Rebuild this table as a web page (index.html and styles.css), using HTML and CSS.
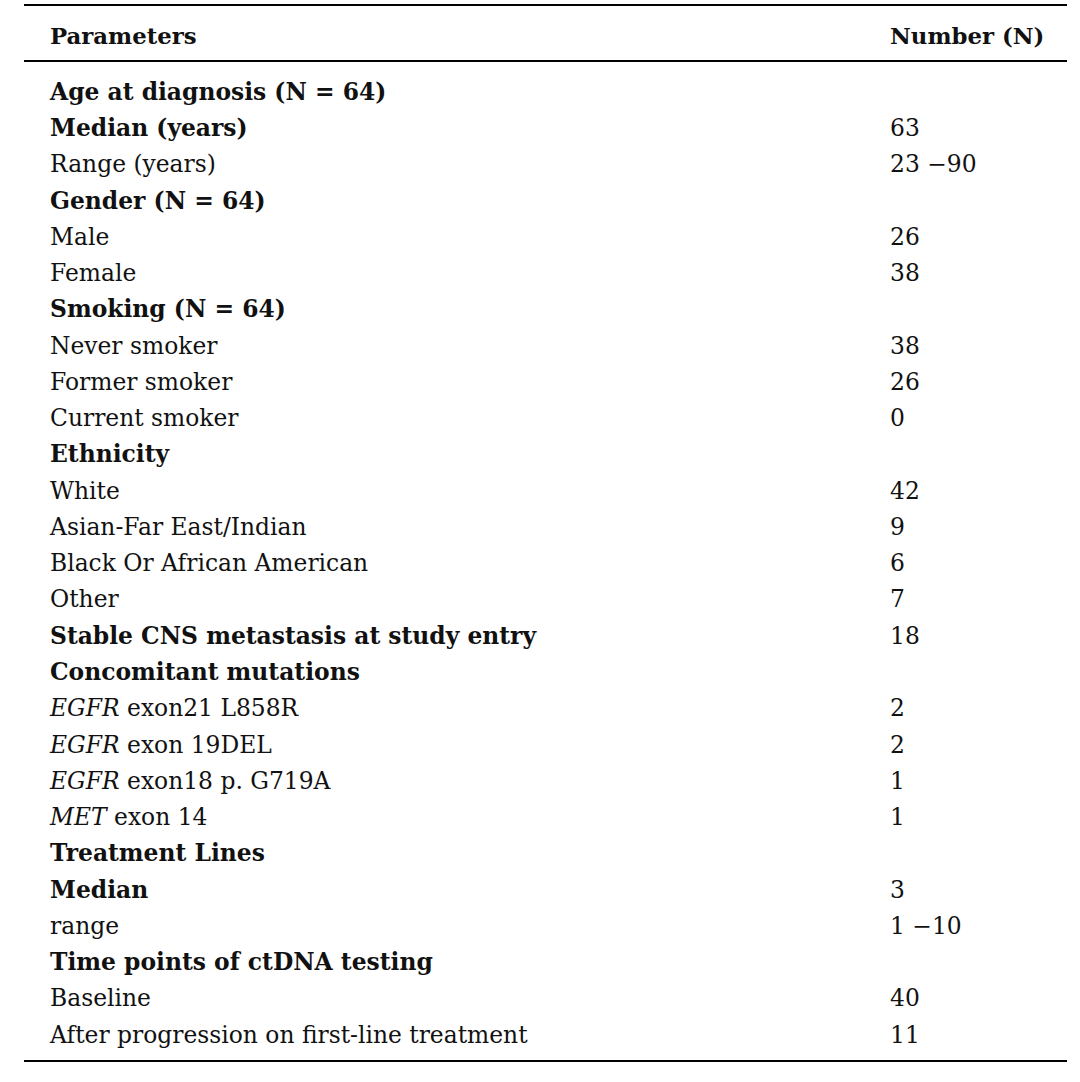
FILE: index.html
```html
<!DOCTYPE html>
<html lang="en">
<head>
<meta charset="utf-8">
<title>Patient characteristics</title>
<link rel="stylesheet" href="styles.css">
</head>
<body>
<table class="data-table">
  <colgroup>
    <col class="col-param">
    <col class="col-num">
  </colgroup>
  <thead>
    <tr><th class="cell-param">Parameters</th><th class="cell-num">Number (N)</th></tr>
  </thead>
  <tbody>
    <tr class="first"><td class="cell-param b">Age at diagnosis (N = 64)</td><td class="cell-num"></td></tr>
    <tr><td class="cell-param b">Median (years)</td><td class="cell-num">63</td></tr>
    <tr><td class="cell-param">Range (years)</td><td class="cell-num">23 &minus;90</td></tr>
    <tr><td class="cell-param b">Gender (N = 64)</td><td class="cell-num"></td></tr>
    <tr><td class="cell-param">Male</td><td class="cell-num">26</td></tr>
    <tr><td class="cell-param">Female</td><td class="cell-num">38</td></tr>
    <tr><td class="cell-param b">Smoking (N = 64)</td><td class="cell-num"></td></tr>
    <tr><td class="cell-param">Never smoker</td><td class="cell-num">38</td></tr>
    <tr><td class="cell-param">Former smoker</td><td class="cell-num">26</td></tr>
    <tr><td class="cell-param">Current smoker</td><td class="cell-num">0</td></tr>
    <tr><td class="cell-param b">Ethnicity</td><td class="cell-num"></td></tr>
    <tr><td class="cell-param">White</td><td class="cell-num">42</td></tr>
    <tr><td class="cell-param">Asian-Far East/Indian</td><td class="cell-num">9</td></tr>
    <tr><td class="cell-param">Black Or African American</td><td class="cell-num">6</td></tr>
    <tr><td class="cell-param">Other</td><td class="cell-num">7</td></tr>
    <tr><td class="cell-param b">Stable CNS metastasis at study entry</td><td class="cell-num">18</td></tr>
    <tr><td class="cell-param b">Concomitant mutations</td><td class="cell-num"></td></tr>
    <tr><td class="cell-param"><i>EGFR</i> exon21 L858R</td><td class="cell-num">2</td></tr>
    <tr><td class="cell-param"><i>EGFR</i> exon 19DEL</td><td class="cell-num">2</td></tr>
    <tr><td class="cell-param"><i>EGFR</i> exon18 p. G719A</td><td class="cell-num">1</td></tr>
    <tr><td class="cell-param"><i>MET</i> exon 14</td><td class="cell-num">1</td></tr>
    <tr><td class="cell-param b">Treatment Lines</td><td class="cell-num"></td></tr>
    <tr><td class="cell-param b">Median</td><td class="cell-num">3</td></tr>
    <tr><td class="cell-param">range</td><td class="cell-num">1 &minus;10</td></tr>
    <tr><td class="cell-param b">Time points of ctDNA testing</td><td class="cell-num"></td></tr>
    <tr><td class="cell-param">Baseline</td><td class="cell-num">40</td></tr>
    <tr class="last"><td class="cell-param">After progression on first-line treatment</td><td class="cell-num">11</td></tr>
  </tbody>
</table>
</body>
</html>
```
FILE: styles.css
```css
html, body {
  margin: 0;
  padding: 0;
  background: #ffffff;
}

body {
  font-family: "DejaVu Serif", "Liberation Serif", serif;
  font-size: 23.4px;
  color: #111111;
}

.data-table {
  margin: 4px 0 0 24px;
  width: 1043px;
  border-collapse: collapse;
  table-layout: fixed;
}

.col-param { width: 866px; }
.col-num { width: 177px; }

.data-table th,
.data-table td {
  padding: 0;
  line-height: 36.27px;
  text-align: left;
  vertical-align: top;
  white-space: nowrap;
}

.cell-param { padding-left: 26px !important; }

.data-table th {
  font-size: 22.8px;
  font-weight: bold;
  border-top: 2px solid #000;
  border-bottom: 2px solid #000;
  padding-top: 11.95px;
  padding-bottom: 5.78px;
}

.b { font-weight: bold; }

.data-table tr.first td { padding-top: 11.75px; }

.data-table tr.last td {
  padding-bottom: 6.98px;
  border-bottom: 2px solid #000;
}
```
